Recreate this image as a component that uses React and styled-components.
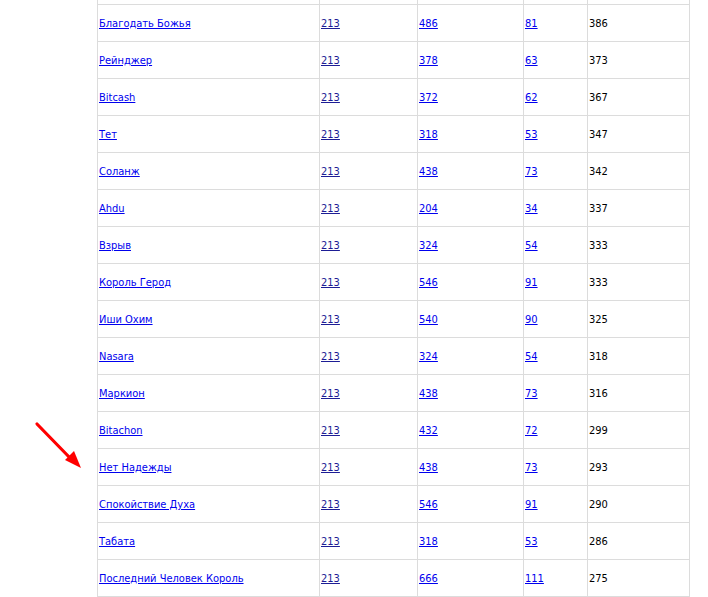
import React from "react"
import styled, { createGlobalStyle } from "styled-components"

const GlobalStyle = createGlobalStyle`
	html, body {
		margin: 0;
		padding: 0;
		background: #fff;
		overflow: hidden;
	}
	body {
		font-family: "DejaVu Sans Condensed", "DejaVu Sans", Verdana, sans-serif;
		font-stretch: semi-condensed;
		font-size: 11px;
	}
`

const Page = styled.div`
	position: relative;
	width: 708px;
	height: 597px;
	overflow: hidden;
	padding-left: 97px;
	box-sizing: border-box;
`

const Table = styled.table`
	border-collapse: collapse;
	table-layout: fixed;
	width: 592px;
	margin-top: -33px;
`

const Col = styled.col`
	width: ${props => props.w}px;
`

const Cell = styled.td`
	border: 1px solid #dcdcdc;
	height: 35px;
	padding: 1px 0 0 1px;
	vertical-align: middle;
	color: #000;
	white-space: nowrap;
`

const Link = styled.a`
	color: ${props => (props.dark ? "#1d1d95" : "#0000ee")};
	text-decoration: underline;
`

const Arrow = styled.svg`
	position: absolute;
	left: 30px;
	top: 416px;
`

const widths = [222, 98, 106, 64, 102]

const rows = [
	["", "", "", "", ""],
	["Благодать Божья", 213, 486, 81, 386],
	["Рейнджер", 213, 378, 63, 373],
	["Bitcash", 213, 372, 62, 367],
	["Тет", 213, 318, 53, 347],
	["Соланж", 213, 438, 73, 342],
	["Ahdu", 213, 204, 34, 337],
	["Взрыв", 213, 324, 54, 333],
	["Король Герод", 213, 546, 91, 333],
	["Иши Охим", 213, 540, 90, 325],
	["Nasara", 213, 324, 54, 318],
	["Маркион", 213, 438, 73, 316],
	["Bitachon", 213, 432, 72, 299],
	["Нет Надежды", 213, 438, 73, 293],
	["Спокойствие Духа", 213, 546, 91, 290],
	["Табата", 213, 318, 53, 286],
	["Последний Человек Король", 213, 666, 111, 275],
]

const App = () => (
	<Page>
		<GlobalStyle />
		<Table>
			<colgroup>
				{widths.map((w, i) => <Col key={i} w={w} />)}
			</colgroup>
			<tbody>
				{rows.map(([name, a, b, c, d], i) => (
					<tr key={i}>
						<Cell>{name && <Link href="#">{name}</Link>}</Cell>
						<Cell>{a && <Link href="#" dark>{a}</Link>}</Cell>
						<Cell>{b && <Link href="#">{b}</Link>}</Cell>
						<Cell>{c && <Link href="#">{c}</Link>}</Cell>
						<Cell>{d}</Cell>
					</tr>
				))}
			</tbody>
		</Table>
		<Arrow width="60" height="60" viewBox="0 0 60 60">
			<line x1="7" y1="8" x2="42" y2="44" stroke="#ff0000" strokeWidth="3.2" strokeLinecap="round" />
			<polygon points="51,52 35,44 44,35" fill="#ff0000" />
		</Arrow>
	</Page>
)

export default App
